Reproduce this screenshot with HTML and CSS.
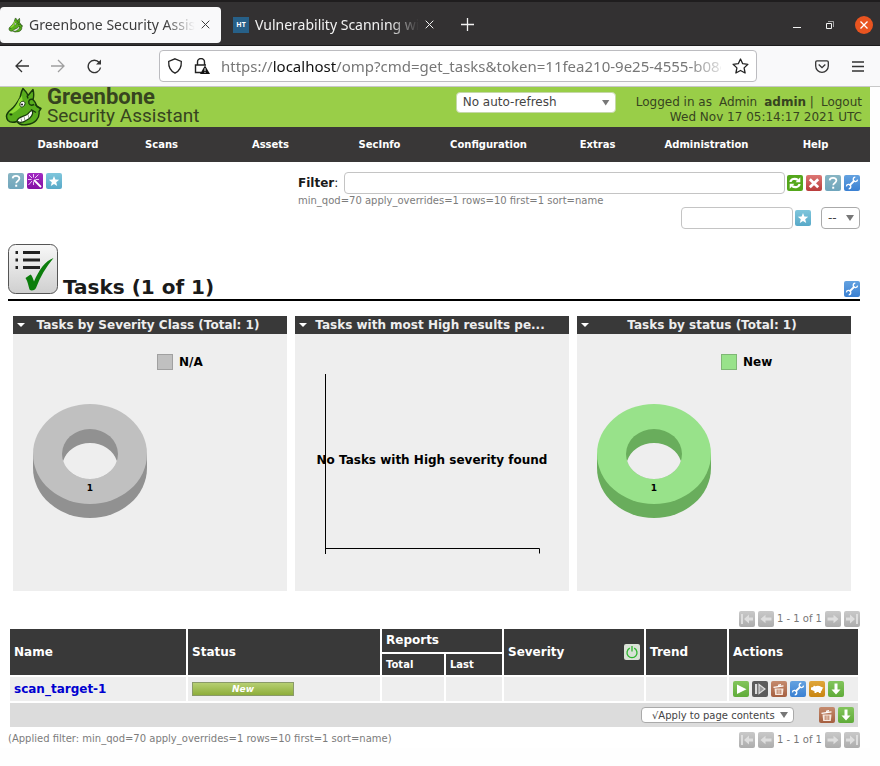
FILE: index.html
```
<!DOCTYPE html>
<html lang="en">
<head>
<meta charset="utf-8">
<title>Greenbone Security Assistant</title>
<link rel="stylesheet" href="styles.css">
</head>
<body>
<svg class="sprite" aria-hidden="true">
  <defs>
    <linearGradient id="g-teal" x2="0" y2="1"><stop stop-color="#88b5c3"/><stop offset="1" stop-color="#6fa5bc"/></linearGradient>
    <linearGradient id="g-star" x2="0" y2="1"><stop stop-color="#7fc6dc"/><stop offset="1" stop-color="#58a9c8"/></linearGradient>
    <linearGradient id="g-purple" x2="0" y2="1"><stop stop-color="#a22bc2"/><stop offset="1" stop-color="#8410a4"/></linearGradient>
    <linearGradient id="g-blue" x2="0" y2="1"><stop stop-color="#64a2e0"/><stop offset="1" stop-color="#3a80d2"/></linearGradient>
    <linearGradient id="g-green" x2="0" y2="1"><stop stop-color="#83c55c"/><stop offset="1" stop-color="#5fab39"/></linearGradient>
    <linearGradient id="g-red" x2="0" y2="1"><stop stop-color="#dd7774"/><stop offset="1" stop-color="#b93c3b"/></linearGradient>
    <linearGradient id="g-brown" x2="0" y2="1"><stop stop-color="#c58b6e"/><stop offset="1" stop-color="#a55f40"/></linearGradient>
    <linearGradient id="g-gold" x2="0" y2="1"><stop stop-color="#e0a63a"/><stop offset="1" stop-color="#c98511"/></linearGradient>
    <linearGradient id="g-gray" x2="0" y2="1"><stop stop-color="#c9c9c9"/><stop offset="1" stop-color="#adadad"/></linearGradient>
    <linearGradient id="g-tile" x2="0" y2="1"><stop stop-color="#f8f8f8"/><stop offset="1" stop-color="#cfcfcf"/></linearGradient>
  </defs>
  <symbol id="i-help" viewBox="0 0 16 16"><rect width="16" height="16" rx="2" fill="url(#g-teal)"/><path d="M4.600 5.400C4.800 3.700 6.200 2.900 8 2.900c2 0 3.400 1 3.400 2.700C11.400 8 8.200 7.900 8.200 10.300" fill="none" stroke="#fff" stroke-width="1.700"/><rect x="7.200" y="11.700" width="2" height="2" fill="#fff"/></symbol>
  <symbol id="i-wizard" viewBox="0 0 16 16"><rect width="16" height="16" rx="2" fill="url(#g-purple)"/><path d="M7 7l7 7" stroke="#fff" stroke-width="1.800"/><path d="M6.500 4.500V1M8 5l3.500-3.500M8.500 6.500H12M4.500 6.500H1M5 5L2 2M5 8l-3.500 4M6.500 8.500V12" stroke="#ecc8f5" stroke-width="1"/></symbol>
  <symbol id="i-star" viewBox="0 0 16 16"><rect width="16" height="16" rx="2" fill="url(#g-star)"/><path d="M8 3l1.400 3.600 3.800.2-3 2.400 1 3.800L8 10.900 4.800 13l1-3.800-3-2.400 3.800-.2z" fill="#fff"/></symbol>
  <symbol id="i-refresh" viewBox="0 0 16 16"><rect width="16" height="16" rx="2" fill="#54a71b"/><path d="M3.500 7C3.700 4 8 2.800 11 5M12.500 9C12.300 12 8 13.200 5 11" fill="none" stroke="#fff" stroke-width="2.200"/><path d="M13.300 2.300v5H8.600zM2.700 13.700v-5h4.700z" fill="#fff"/></symbol>
  <symbol id="i-clear" viewBox="0 0 16 16"><rect width="16" height="16" rx="2" fill="url(#g-red)"/><path d="M3.800 4.200l8.400 8M12.200 4.200l-8.400 8" stroke="#fff" stroke-width="2.800"/></symbol>
  <symbol id="i-edit" viewBox="0 0 16 16"><rect width="16" height="16" rx="2" fill="url(#g-blue)"/><path d="M5.500 10.500l5-5" stroke="#fff" stroke-width="1.800"/><path d="M13.600 4.700a2.200 2.200 0 1 1-2.300-2.500M2.400 11.300a2.200 2.200 0 1 1 2.300 2.500" fill="none" stroke="#fff" stroke-width="1.300"/></symbol>
  <symbol id="i-start" viewBox="0 0 16 16"><rect width="16" height="16" rx="2" fill="url(#g-green)"/><path d="M4 3.500l9.500 4.700L4 13z" fill="#fff"/></symbol>
  <symbol id="i-resume" viewBox="0 0 16 16"><rect width="16" height="16" rx="2" fill="#5b5b5b"/><path d="M3 3h2.200v10H3z" fill="#ddd"/><path d="M7 3.500v9l6-4.500z" fill="#999" stroke="#ddd" stroke-width="1.200"/></symbol>
  <symbol id="i-trash" viewBox="0 0 16 16"><rect width="16" height="16" rx="2" fill="url(#g-brown)"/><path d="M3.500 7.500h9l-.7 6.500H4.200z" fill="#f7e8df"/><path d="M6.200 8.500v4.500M8 8.500v4.500M9.800 8.500v4.500" stroke="#b16e4d" stroke-width=".9"/><path d="M2.500 6.300l10-1.500M7 4.300l3-.7" stroke="#fff" stroke-width="1.300"/></symbol>
  <symbol id="i-clone" viewBox="0 0 16 16"><rect width="16" height="16" rx="2" fill="url(#g-gold)"/><path d="M2 6.500l2-.5 1-1.500 1.200.8c2-.9 4.300-.8 5.800.5l2.500 1-1.200 1c0 1.200-.7 2.200-1.500 2.700v1.500h-2V11H7.500v1h-2v-1.700L3.500 9.200 2 8.700z" fill="#fff"/></symbol>
  <symbol id="i-download" viewBox="0 0 16 16"><rect width="16" height="16" rx="2" fill="url(#g-green)"/><path d="M6.500 2.500h3v6h3L8 13.500l-4.500-5h3z" fill="#fff"/></symbol>
  <symbol id="i-next" viewBox="0 0 16 16"><rect width="16" height="16" rx="2" fill="url(#g-gray)"/><path d="M2.500 6.500h6V3.800L13.500 8l-5 4.200V9.500h-6z" fill="#dedede"/></symbol>
  <symbol id="i-last" viewBox="0 0 16 16"><rect width="16" height="16" rx="2" fill="url(#g-gray)"/><path d="M2 6.500h4V3.500L11 8l-5 4.500v-3H2zM12 3h2v10h-2z" fill="#dedede"/></symbol>
  <symbol id="i-power" viewBox="0 0 16 16"><rect width="16" height="16" rx="2" fill="#d9e2d6"/><path d="M5.800 4.200a5 5 0 1 0 4.400 0M8 2v5.500" fill="none" stroke="#2eb52e" stroke-width="1.300"/></symbol>
  <symbol id="i-dragon" viewBox="0 0 38 38">
    <path d="M19 1c2 2 4 4 5 7l5-6c1 4 1 7 0 10 2 2 3 4 4 7l4 2-2 3c1 7-4 12-12 13-5 1-8 0-10-3-3 1-7 1-9-1-3-4-1-8 3-11 5-4 7-8 9-12 1-3 1-6 3-9z" fill="#58ad1c" stroke="#173a0b" stroke-width="1.400" stroke-linejoin="round"/>
    <path d="M18 8c0 4 1 6 3 8-4 2-6 7-13 10l-3-1c5-3 8-8 10-13z" fill="#8edb35"/>
    <path d="M23 8l1 3M29 12c-3-1-5 1-4 4 1 2 3 2 5 1M31 17l5 4M27 22l5 3" fill="none" stroke="#173a0b" stroke-width="1.400"/>
    <path d="M13 33c2-4 7-4 10-6 2-1 3-4 5-4 2 3-1 8-6 10-3 2-7 3-9 0z" fill="#fff" stroke="#173a0b" stroke-width="1.200"/>
    <path d="M17 31l1 4M20 29l1 4M24 27l1 4" stroke="#667b5e" stroke-width=".7"/>
    <path d="M16 16c1-3 5-3 5 0 0 3-4 5-5 2z" fill="#fff" stroke="#173a0b"/><circle cx="18" cy="17" r="1" fill="#111"/>
    <ellipse cx="7" cy="27" rx="1.500" ry="1" fill="#173a0b"/>
  </symbol>
</svg>

<header class="browser">
  <div class="tabs">
    <div class="tab tab-active">
      <svg class="favicon" viewBox="0 0 38 38"><use href="#i-dragon"/></svg>
      <span class="tab-title">Greenbone Security Assis</span>
      <button class="bare" aria-label="Close tab"><svg width="9" height="9" viewBox="0 0 9 9"><path d="M.7.7l7.600 7.600M8.300.7L.7 8.300" stroke="currentColor"/></svg></button>
    </div>
    <div class="tab">
      <span class="ht">HT</span>
      <span class="tab-title">Vulnerability Scanning wi</span>
      <button class="bare" aria-label="Close tab"><svg width="9" height="9" viewBox="0 0 9 9"><path d="M.7.7l7.600 7.600M8.300.7L.7 8.300" stroke="currentColor"/></svg></button>
    </div>
    <button class="bare new-tab" aria-label="New tab"><svg width="13" height="13" viewBox="0 0 13 13"><path d="M6.500 0v13M0 6.500h13" stroke="currentColor" stroke-width="1.300"/></svg></button>
    <div class="window-buttons">
      <button class="bare" aria-label="Minimize"><svg width="8" height="8" viewBox="0 0 8 8"><path d="M0 6.500h8" stroke="currentColor"/></svg></button>
      <button class="bare" aria-label="Restore"><svg width="8" height="8" viewBox="0 0 8 8" fill="none" stroke="currentColor"><path d="M.5 2.500h5v5h-5z"/><path d="M2 .5h5.500V6" opacity=".6"/></svg></button>
      <button class="bare close" aria-label="Close window"><svg width="8" height="8" viewBox="0 0 8 8"><path d="M.5.5l7 7M7.500.5l-7 7" stroke="currentColor" stroke-width="1.300"/></svg></button>
    </div>
  </div>
  <div class="toolbar">
    <div class="history">
      <button class="bare" aria-label="Back"><svg width="14" height="14" viewBox="0 0 14 14" fill="none" stroke="currentColor" stroke-width="1.300"><path d="M14 7H1M7 1L1 7l6 6"/></svg></button>
      <button class="bare dim" aria-label="Forward"><svg width="14" height="14" viewBox="0 0 14 14" fill="none" stroke="currentColor" stroke-width="1.300"><path d="M0 7h13M7 1l6 6-6 6"/></svg></button>
      <button class="bare" aria-label="Reload"><svg width="15" height="15" viewBox="0 0 15 15" fill="none" stroke="currentColor" stroke-width="1.400"><path d="M13.500 8.500a6.200 6.200 0 1 1-1.300-5"/><path d="M14 .5v5H9z" fill="currentColor" stroke="none"/></svg></button>
    </div>
    <div class="address">
      <svg width="16" height="16" viewBox="0 0 16 16" fill="none" stroke="#222" stroke-width="1.300"><path d="M8 .8l6.300 2.700c.3 5-1.300 9.200-6.300 11.700C3 12.700 1.400 8.500 1.700 3.500z"/></svg>
      <svg width="16" height="16" viewBox="0 0 16 16"><path d="M3.500 7V4a3.500 3.500 0 0 1 7 0v3M7 14.500H1.500V7H12" fill="none" stroke="#222" stroke-width="1.400"/><path d="M11 7.500l5 8.500H6z" fill="#111"/><path d="M11 10.200v3M11 14v1" stroke="#fff"/></svg>
      <span class="url">https://<b>localhost</b>/omp?cmd=get_tasks&amp;token=11fea210-9e25-4555-b08c</span>
      <button class="bare" aria-label="Bookmark"><svg width="17" height="16" viewBox="0 0 17 16" fill="none" stroke="#222" stroke-width="1.300" stroke-linejoin="round"><path d="M8.500 1l2.200 4.700 5.200.6-3.800 3.600 1 5.100-4.600-2.500L3.900 15l1-5.100L1.100 6.300l5.200-.6z"/></svg></button>
    </div>
    <div class="tools">
      <button class="bare" aria-label="Pocket"><svg width="14" height="13" viewBox="0 0 14 13" fill="none" stroke="currentColor" stroke-width="1.300"><path d="M2 .8h10q1.300 0 1.300 1.300v3.900a6.300 6.300 0 0 1-12.600 0V2.100Q.7.8 2 .8zM3.700 4.500L7 7.700l3.300-3.200"/></svg></button>
      <button class="bare" aria-label="Menu"><svg width="12" height="11" viewBox="0 0 12 11"><path d="M0 1h12M0 5.500h12M0 10h12" stroke="currentColor" stroke-width="1.300"/></svg></button>
    </div>
  </div>
</header>

<div class="page">
  <div class="banner">
    <svg class="dragon"><use href="#i-dragon"/></svg>
    <div class="brand"><strong>Greenbone</strong><span>Security Assistant</span></div>
    <div class="select refresh"><select aria-label="Auto-refresh"><option>No auto-refresh</option></select></div>
    <div class="session">
      <div><span>Logged in as</span><a href="#">Admin</a><span><b>admin</b> |</span><a href="#">Logout</a></div>
      <time>Wed Nov 17 05:14:17 2021 UTC</time>
    </div>
  </div>
  <nav class="menu">
    <a href="#">Dashboard</a><a href="#">Scans</a><a href="#">Assets</a><a href="#">SecInfo</a><a href="#">Configuration</a><a href="#">Extras</a><a href="#">Administration</a><a href="#">Help</a>
  </nav>

  <main>
    <section class="controls">
      <div class="icons start">
        <button class="bare" aria-label="Help"><svg class="icon"><use href="#i-help"/></svg></button>
        <button class="bare" aria-label="Wizard"><svg class="icon"><use href="#i-wizard"/></svg></button>
        <button class="bare" aria-label="New task"><svg class="icon"><use href="#i-star"/></svg></button>
      </div>
      <form class="filter">
        <div class="filter-row">
          <label for="filter"><b>Filter</b>:</label>
          <input id="filter" type="text">
          <div class="icons">
            <button type="button" class="bare" aria-label="Update filter"><svg class="icon"><use href="#i-refresh"/></svg></button>
            <button type="button" class="bare" aria-label="Reset filter"><svg class="icon"><use href="#i-clear"/></svg></button>
            <button type="button" class="bare" aria-label="Filter help"><svg class="icon"><use href="#i-help"/></svg></button>
            <button type="button" class="bare" aria-label="Edit filter"><svg class="icon"><use href="#i-edit"/></svg></button>
          </div>
        </div>
        <div class="note">min_qod=70 apply_overrides=1 rows=10 first=1 sort=name</div>
        <div class="saved">
          <input type="text" aria-label="Filter name">
          <button type="button" class="bare" aria-label="Save filter"><svg class="icon"><use href="#i-star"/></svg></button>
          <div class="select choose"><select aria-label="Saved filter"><option>--</option></select></div>
        </div>
      </form>
    </section>

    <div class="title">
      <svg class="task-icon" viewBox="0 0 50 50"><rect x=".5" y=".5" width="49" height="49" rx="7" fill="url(#g-tile)" stroke="#555"/><path d="M7.500 8.500h2.500M7.500 16h2.500M7.500 23.500h2.500M15 8.500h17M15 16h17M15 23.500h17" stroke="#222" stroke-width="3.200"/><path d="M17.500 34l5-3.500c1.500 1 2.500 4 3.500 7C31 26 37 17 45.500 14 38 23 32 33 28 44c-2 3-5 3-6.500 1.500C20 41 20 38 17.500 34z" fill="#0b7d0b"/></svg>
      <h1>Tasks (1 of 1)</h1>
      <button class="bare" aria-label="Edit dashboard"><svg class="icon"><use href="#i-edit"/></svg></button>
    </div>

    <section class="charts">
      <article>
        <header><button class="bare arrow" aria-label="Chart menu"></button><h2>Tasks by Severity Class (Total: 1)</h2></header>
        <svg viewBox="0 0 274 257">
          <ellipse cx="77" cy="134" rx="57" ry="50" fill="#919191"/><path d="M20 120h114v14H20z" fill="#919191"/>
          <ellipse cx="77" cy="120" rx="57" ry="50" fill="#c0c0c0"/><ellipse cx="77" cy="120" rx="28" ry="25" fill="#919191"/>
          <path d="M50.100 127a28 25 0 0 1 53.800 0a28 25 0 0 1-53.800 0z" fill="#eee"/>
          <text class="count" x="77" y="157">1</text>
          <rect x="144.500" y="20.500" width="15" height="15" fill="#c0c0c0" stroke="#a0a0a0"/><text x="166" y="32">N/A</text>
        </svg>
      </article>
      <article>
        <header><button class="bare arrow" aria-label="Chart menu"></button><h2>Tasks with most High results pe...</h2></header>
        <svg viewBox="0 0 274 257">
          <path d="M30.500 40v180M30 214.500h214.500v5" fill="none" stroke="#000"/>
          <text class="middle" x="137" y="130">No Tasks with High severity found</text>
        </svg>
      </article>
      <article>
        <header><button class="bare arrow" aria-label="Chart menu"></button><h2>Tasks by status (Total: 1)</h2></header>
        <svg viewBox="0 0 274 257">
          <ellipse cx="77" cy="134" rx="57" ry="50" fill="#69ad5c"/><path d="M20 120h114v14H20z" fill="#69ad5c"/>
          <ellipse cx="77" cy="120" rx="57" ry="50" fill="#98e28a"/><ellipse cx="77" cy="120" rx="28" ry="25" fill="#69ad5c"/>
          <path d="M50.100 127a28 25 0 0 1 53.800 0a28 25 0 0 1-53.800 0z" fill="#eee"/>
          <text class="count" x="77" y="157">1</text>
          <rect x="144.500" y="20.500" width="15" height="15" fill="#98e28a" stroke="#7fb775"/><text x="166" y="32">New</text>
        </svg>
      </article>
    </section>

    <div class="pager">
      <svg class="icon flip"><use href="#i-last"/></svg><svg class="icon flip"><use href="#i-next"/></svg>
      <span>1 - 1 of 1</span>
      <svg class="icon"><use href="#i-next"/></svg><svg class="icon"><use href="#i-last"/></svg>
    </div>

    <table>
      <colgroup><col class="c-name"><col class="c-status"><col class="c-total"><col class="c-last"><col class="c-severity"><col class="c-trend"><col class="c-actions"></colgroup>
      <thead>
        <tr><th rowspan="2">Name</th><th rowspan="2">Status</th><th colspan="2">Reports</th><th rowspan="2"><div class="severity">Severity<button class="bare" aria-label="Toggle overrides"><svg class="icon"><use href="#i-power"/></svg></button></div></th><th rowspan="2">Trend</th><th rowspan="2">Actions</th></tr>
        <tr class="sub"><th>Total</th><th>Last</th></tr>
      </thead>
      <tbody>
        <tr>
          <td><a class="task" href="#">scan_target-1</a></td><td><div class="status">New</div></td><td></td><td></td><td></td><td></td>
          <td><div class="icons">
            <button class="bare" aria-label="Start"><svg class="icon"><use href="#i-start"/></svg></button>
            <button class="bare" aria-label="Resume"><svg class="icon"><use href="#i-resume"/></svg></button>
            <button class="bare" aria-label="Move to trash"><svg class="icon"><use href="#i-trash"/></svg></button>
            <button class="bare" aria-label="Edit"><svg class="icon"><use href="#i-edit"/></svg></button>
            <button class="bare" aria-label="Clone"><svg class="icon"><use href="#i-clone"/></svg></button>
            <button class="bare" aria-label="Export"><svg class="icon"><use href="#i-download"/></svg></button>
          </div></td>
        </tr>
      </tbody>
      <tfoot>
        <tr><td colspan="7"><div class="bulk">
          <div class="select apply"><select aria-label="Apply to"><option>√Apply to page contents</option></select></div>
          <div class="icons">
            <button class="bare" aria-label="Move all to trash"><svg class="icon"><use href="#i-trash"/></svg></button>
            <button class="bare" aria-label="Export all"><svg class="icon"><use href="#i-download"/></svg></button>
          </div>
        </div></td></tr>
      </tfoot>
    </table>
    <div class="below">
      <div class="note">(Applied filter: min_qod=70 apply_overrides=1 rows=10 first=1 sort=name)</div>
      <div class="pager">
        <svg class="icon flip"><use href="#i-last"/></svg><svg class="icon flip"><use href="#i-next"/></svg>
        <span>1 - 1 of 1</span>
        <svg class="icon"><use href="#i-next"/></svg><svg class="icon"><use href="#i-last"/></svg>
      </div>
    </div>
  </main>
</div>
</body>
</html>
```
FILE: styles.css
```
* { box-sizing: border-box; }
body { margin: 0; background: #fefefe; color: #1a1a1a; font: 12px/15px "DejaVu Sans", sans-serif; }
svg { display: block; }
a { color: inherit; text-decoration: none; }
input, select, button { font: inherit; color: inherit; }
.sprite { position: absolute; width: 0; height: 0; }
.bare { display: block; flex: none; padding: 0; border: 0; background: none; }
.icon { width: 16px; height: 16px; flex: none; }
.icons { display: flex; align-items: flex-start; gap: 3px; }
.flip { transform: scaleX(-1); }

/* Browser window */
.browser { font-family: "Noto Sans", sans-serif; }
.tabs { display: flex; align-items: center; height: 46px; padding: 4px 7px 2px 0; background: #333132; border-top: 2px solid #1f1d1e; border-bottom: 1px solid #1c1b1c; color: #f2f2f2; }
.tab { display: flex; align-items: center; gap: 6px; width: 221px; height: 36px; padding: 0 11px 0 8px; font-size: 14px; line-height: 20px; border-radius: 4px; }
.tab + .tab { padding-left: 12px; width: 224px; }
.tab-active { background: #f9f9fa; color: #3d3d3d; }
.tab-title { flex: 1; min-width: 0; white-space: nowrap; mask-image: linear-gradient(90deg, #000 82%, transparent); }
.favicon { width: 15px; height: 16px; flex: none; }
.ht { width: 16px; height: 16px; flex: none; background: #276088; color: #fff; font-size: 7px; font-weight: bold; line-height: 16px; text-align: center; }
.new-tab { margin-left: 16px; }
.window-buttons { display: flex; align-items: center; gap: 25px; margin-left: auto; }
.close { display: grid; place-items: center; width: 18px; height: 18px; margin-left: -4px; border-radius: 50%; background: #e95420; color: #fff; }
.toolbar { display: flex; align-items: center; height: 41px; padding: 0 16px 0 15px; background: #f9f9fa; border-bottom: 1px solid #c8c8c8; color: #333; }
.history { display: flex; align-items: center; gap: 22px; width: 144px; }
.dim { opacity: .45; }
.address { display: flex; flex: 1; align-items: center; gap: 11px; height: 32px; padding: 0 7px; background: #fff; border: 1px solid #bcbcc0; border-radius: 4px; min-width: 0; }
.url { flex: 1; min-width: 0; white-space: nowrap; color: #777; font-size: 15px; line-height: 22px; mask-image: linear-gradient(90deg, #000 93%, transparent 102%); }
.url b { color: #111; font-weight: normal; }
.tools { display: flex; align-items: center; gap: 23px; width: 107px; justify-content: flex-end; }

/* Application banner */
.page { margin-right: 10px; background: #fff; }
.banner { display: flex; height: 40px; padding: 0 8px 0 4px; background: #99ce48; color: #36441f; }
.dragon { width: 38px; height: 39px; flex: none; }
.brand { display: flex; flex-direction: column; margin-left: 5px; font: 19px/18px Roboto, sans-serif; }
.brand strong { font-size: 22px; line-height: 20px; }
.select { position: relative; }
.select select { appearance: none; display: block; width: 100%; margin: 0; padding: 0 6px; border: 1px solid #aaa; border-radius: 4px; background: #fff; color: #444; }
.select::after { content: ""; position: absolute; right: 6px; top: 50%; width: 8px; height: 6px; margin-top: -3px; background: #777; clip-path: polygon(0 0, 100% 0, 50% 100%); pointer-events: none; }
.refresh { align-self: flex-start; width: 160px; margin: 5px 20px 0 auto; }
.refresh select { height: 21px; border-color: #c5d8a8; }
.session { padding-top: 8px; text-align: right; }
.session div { display: flex; gap: 7px; justify-content: flex-end; }
.menu { display: grid; grid-template-columns: 78px repeat(7, 1fr); height: 35px; padding-left: 29px; background: #393737; color: #fff; font-size: 10px; font-weight: bold; line-height: 35px; text-align: center; }

/* Filter controls */
main { padding: 10px 10px 0 8px; }
.controls { display: flex; justify-content: space-between; }
.start { padding-top: 1px; }
.filter { width: 562px; }
.filter-row, .saved { display: flex; align-items: center; }
.filter-row label { width: 46px; }
.filter-row input { flex: 1; min-width: 0; margin-right: 2px; }
.filter input { height: 22px; padding: 0 4px; border: 1px solid #c4c4c4; border-radius: 4px; background: #fff; }
.note { color: #7c7c7c; font-size: 10px; line-height: 13px; }
.saved { justify-content: flex-end; }
.saved input { width: 112px; margin-right: 2px; }
.choose { width: 39px; margin-left: 10px; }
.choose select { height: 22px; }

/* Title and charts */
.title { display: flex; align-items: flex-end; height: 72px; padding-bottom: 5px; border-bottom: 2px solid #000; }
.task-icon { width: 50px; height: 50px; flex: none; }
h1 { flex: 1; margin: 0 0 -5px 5px; font-size: 20px; line-height: 24px; }
.title .bare { margin-bottom: -3px; }
.charts { display: grid; grid-template-columns: repeat(3, 1fr); gap: 8px; margin: 15px 9px 20px 5px; }
.charts article { background: #eee; }
.charts header { display: flex; align-items: center; height: 18px; padding: 0 16px 0 4px; background: #393939; color: #eee; }
.arrow { width: 8px; height: 4px; background: #fff; clip-path: polygon(0 0, 100% 0, 50% 100%); }
h2 { flex: 1; margin: 0; font-size: 12px; line-height: 18px; text-align: center; }
.charts svg { width: 100%; }
.charts text { font-size: 12px; font-weight: bold; fill: #000; }
.charts .count { font-size: 9px; text-anchor: middle; }
.charts .middle { text-anchor: middle; }

/* Task table */
.pager { display: flex; align-items: center; justify-content: flex-end; gap: 3px; color: #777; font-size: 10px; line-height: 16px; }
table { width: 100%; table-layout: fixed; border-spacing: 2px; margin-bottom: 3px; }
th, td { padding: 0 4px; text-align: left; background: #eee; }
th { height: 23px; background: #393939; color: #fff; }
.sub th { height: 21px; font-size: 10px; }
td { height: 24px; }
tfoot td { background: #dcdcdc; }
.c-name { width: 176px; } .c-status { width: 192px; } .c-total { width: 62px; } .c-last { width: 56px; }
.c-severity { width: 140px; } .c-actions { width: 129px; }
.severity { display: flex; align-items: center; justify-content: space-between; }
.task { color: #0000d0; font-weight: bold; }
.status { width: 102px; height: 14px; border: 1px solid #8a9a69; background: linear-gradient(#b6cf72, #8eae3b); color: #fff; font-size: 9px; font-style: italic; font-weight: bold; line-height: 12px; text-align: center; }
.bulk { display: flex; align-items: center; justify-content: flex-end; gap: 25px; }
.apply { width: 153px; font-size: 10px; }
.apply select { height: 16px; padding-left: 10px; }
.below { display: flex; justify-content: space-between; }
```
